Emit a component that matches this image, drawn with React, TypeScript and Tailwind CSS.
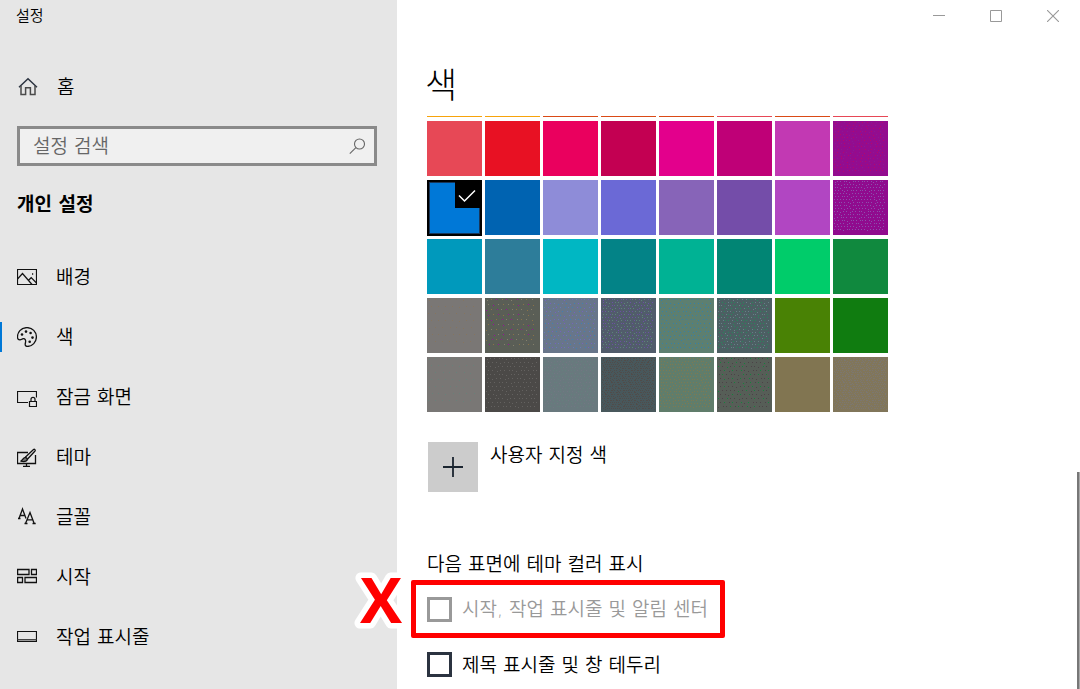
import { FC, ReactNode } from "react";

// Types
interface iNavItem {
  label: string;
  icon: ReactNode;
  active?: boolean;
}

interface iSwatch {
  color: string;
  dots?: string[];
  step?: number;
}

// Icons
const HomeIcon = () => (
  <svg width="20" height="20" viewBox="0 0 20 20" fill="none" stroke="#2b3340" strokeWidth="1.5">
    <path d="M1 10.3 10 1.8l9 8.5" />
    <path d="M3 8.8v8.7h4.6v-6.8h4.8v6.8H17V8.8" stroke="#4a4a4a" />
  </svg>
);

const SearchIcon = () => (
  <svg width="18" height="18" viewBox="0 0 18 18" fill="none" stroke="#666" strokeWidth="1.1">
    <circle cx="11.5" cy="7" r="5" />
    <path d="M7.9 10.6 1.8 16.7" />
  </svg>
);

const PictureIcon = () => (
  <svg width="20" height="20" viewBox="0 0 20 20" fill="none" stroke="#111" strokeWidth="1.2">
    <path d="M.5 2.5h19v15H.5z" />
    <path d="m.5 12 5-5.5 9.5 11M11.5 13.300l2.700-2.600 5.300 5.300" />
    <path d="M15 7h1.200" strokeWidth="1.4" />
  </svg>
);

const PaletteIcon = () => (
  <svg width="20" height="20" viewBox="0 0 20 20" fill="none" stroke="#111" strokeWidth="1.3">
    <path d="M.6 11.2C-.2 5 4.3.6 10 .6c5.5 0 9.4 4.2 9.4 9.4s-4 9.4-9 9.4c-1.6 0-2.300-.9-2.200-2.200.1-1.500.6-2 .4-3.500-.2-1.600-1.600-2.600-3.100-1.900-1 .5-1.400 1.100-2.700 1-1.200-.1-2-.7-2.200-1.600Z" />
    <g fill="#111" stroke="none">
      <circle cx="5" cy="7.5" r="1.3" />
      <circle cx="9" cy="4.6" r="1.3" />
      <circle cx="13.600" cy="6" r="1.3" />
      <circle cx="15.5" cy="10.600" r="1.3" />
      <circle cx="12.700" cy="14.800" r="1.3" />
    </g>
  </svg>
);

const LockScreenIcon = () => (
  <svg width="20" height="20" viewBox="0 0 20 20" fill="none" stroke="#111" strokeWidth="1.2">
    <path d="M11 15.5H.5v-11h19v6" />
    <path d="M12.5 14.5h7v5h-7z" />
    <path d="M14 14.500v-2.200a2 2 0 0 1 4 0v2.200" />
  </svg>
);

const ThemeIcon = () => (
  <svg width="20" height="20" viewBox="0 0 20 20" fill="none" stroke="#111" strokeWidth="1.3">
    <path d="M11 5.5H.5v11h18V8M9.5 16.5v3M6 19.4h7" />
    <path d="M8.3 10.3 16.5 2.5c1-.7 2.3.5 1.5 1.5l-7.600 8.300" />
    <path d="M8.3 10.3c1 .2 1.800 1 2.100 2-.5 2-3.500 2.600-6.900 1.900 2.300-.4 2.100-3.700 4.800-3.900Z" fill="#777" />
  </svg>
);

const FontIcon = () => (
  <svg width="20" height="20" viewBox="0 1 20 20" fill="none" stroke="#111" strokeWidth="1.3">
    <path d="M2 12.5 5.5 3 9 12.5M3.2 9.5h4.600M1 12.500h2.500" />
    <path d="M8.5 17.5 13 6.500l4.200 11M10 13.800h5.800M7.500 17.500h3M15.500 17.500h3.200" />
  </svg>
);

const StartIcon = () => (
  <svg width="20" height="20" viewBox="0 0 20 20" fill="none" stroke="#111" strokeWidth="1.3">
    <path d="M.6 2.5h11.400v5H.6zM14.500 2.500h5v5h-5zM.6 10.500h4.900v5H.6zM8 10.500h11.500v5H8z" />
  </svg>
);

const TaskbarIcon = () => (
  <svg width="20" height="20" viewBox="0 0 20 20" fill="none" stroke="#111">
    <path d="M1 12.5h18v2H1z" fill="#999" stroke="none" />
    <path d="M.5 4.5h19v10H.5z" strokeWidth="1.2" />
    <path d="M.5 12.5h19" stroke="#444" />
  </svg>
);

// Data
const navItems: iNavItem[] = [
  { label: "배경", icon: <PictureIcon /> },
  { label: "색", icon: <PaletteIcon />, active: true },
  { label: "잠금 화면", icon: <LockScreenIcon /> },
  { label: "테마", icon: <ThemeIcon /> },
  { label: "글꼴", icon: <FontIcon /> },
  { label: "시작", icon: <StartIcon /> },
  { label: "작업 표시줄", icon: <TaskbarIcon /> },
];

const clippedRow = ["#f7a30b", "#f7a30b", "#da4a16", "#da4a16", "#da4a16", "#e74856", "#da4a16", "#e74856"];

const swatches: iSwatch[] = [
  { color: "#e74856" },
  { color: "#e81123" },
  { color: "#ea005e" },
  { color: "#c30052" },
  { color: "#e3008c" },
  { color: "#bf0077" },
  { color: "#c239b3" },
  { color: "#930c8f", dots: ["#b8066c", "#8a1a94", "#a00a80"], step: 3 },
  { color: "#0078d7" },
  { color: "#0063b1" },
  { color: "#8e8cd8" },
  { color: "#6b69d6" },
  { color: "#8764b8" },
  { color: "#744da9" },
  { color: "#b146c2" },
  { color: "#900b8e", dots: ["#8c4fae"], step: 3 },
  { color: "#0099bc" },
  { color: "#2d7d9a" },
  { color: "#00b7c3" },
  { color: "#038387" },
  { color: "#00b294" },
  { color: "#018574" },
  { color: "#00cc6a" },
  { color: "#10893e" },
  { color: "#7a7775", dots: ["#857560"], step: 7 },
  { color: "#5a5e56", dots: ["#84806c", "#8a7348", "#98109a"], step: 5 },
  { color: "#68768a", dots: ["#7660c0", "#6878b8", "#3e80b4"], step: 4 },
  { color: "#515c6b", dots: ["#6c50a4", "#5d8579"], step: 3 },
  { color: "#5d7f70", dots: ["#3480a8"], step: 4 },
  { color: "#4c5f63", dots: ["#668087", "#26885a"], step: 3 },
  { color: "#498205" },
  { color: "#107c10" },
  { color: "#797775", dots: ["#698079"], step: 7 },
  { color: "#4b4947", dots: ["#646260"], step: 4 },
  { color: "#69797e", dots: ["#64817d", "#727783"], step: 3 },
  { color: "#48585c", dots: ["#504c4a"], step: 2 },
  { color: "#607d6b", dots: ["#7f7a50"], step: 3 },
  { color: "#565e57", dots: ["#4c4247", "#13843c", "#4c4247"], step: 4 },
  { color: "#817551" },
  { color: "#81765a", dots: ["#7c7770"], step: 2 },
];

// Components
const Dither: FC<{ dots: string[]; step: number }> = ({ dots, step }) => {
  const count = Math.floor(53 / step);
  return (
    <svg className="block" width="55" height="55" viewBox="0 0 55 55" shapeRendering="crispEdges" aria-hidden="true">
      {Array.from({ length: count * count }, (_, i) => {
        const row = Math.floor(i / count);
        const seed = (i * 37 + row * row * 11) % 101;
        const x = 1 + (i % count) * step + (row % 2) * Math.floor(step / 2) + (seed % 5 === 0 ? 1 : 0);
        const y = 1 + row * step + (seed % 7 === 0 ? 1 : 0);
        return <rect key={i} x={x} y={y} width="1" height="1" fill={dots[seed % dots.length]} />;
      })}
    </svg>
  );
};

const Swatch: FC<iSwatch & { selected: boolean }> = ({ color, dots, step = 4, selected }) => (
  <button
    type="button"
    aria-label={color}
    aria-pressed={selected}
    className="relative size-[55px]"
    style={{ backgroundColor: color }}
  >
    {dots && <Dither dots={dots} step={step} />}
    {selected && (
      <>
        <span className="absolute inset-0 -bottom-px border-2 border-black bg-[#0078d7] outline -outline-offset-3 outline-[#17365a]" />
        <span className="absolute top-0 right-0 flex h-7 w-[27px] items-center justify-center bg-black pr-[3px] pt-1">
          <svg width="18" height="14" viewBox="0 0 18 14" fill="none" stroke="#fff" strokeWidth="1.5">
            <path d="m1 6.5 5.5 5.5L17 1.5" />
          </svg>
        </span>
      </>
    )}
  </button>
);

const Sidebar = () => (
  <aside className="w-[397px] shrink-0 bg-[#e6e6e6]">
    <div className="flex h-8 items-center pl-4 text-[15px]">설정</div>
    <a href="#home" className="mt-[25px] flex h-[60px] items-center gap-[19px] pl-[18px]">
      <HomeIcon />
      홈
    </a>
    <label className="mx-[17px] mt-[9px] mr-5 flex h-10 items-center border-3 border-[#8a8a8a] bg-[#f0f0f0] pr-2 pl-[13px]">
      <input
        type="search"
        aria-label="설정 검색"
        placeholder="설정 검색"
        className="min-w-0 flex-1 bg-transparent outline-none placeholder:text-[#666]"
      />
      <SearchIcon />
    </label>
    <h2 className="mt-6 pl-[17px] text-[19px] leading-7 font-bold">개인 설정</h2>
    <nav className="mt-[29px]">
      {navItems.map((item) => (
        <a
          key={item.label}
          href={`#${item.label}`}
          aria-current={item.active ? "page" : undefined}
          className="relative flex h-[60px] items-center gap-[19px] pl-[17px]"
        >
          {item.active && <span className="absolute left-0 h-[30px] w-[2px] bg-[#0078d7]" />}
          {item.icon}
          {item.label}
        </a>
      ))}
    </nav>
  </aside>
);

const TitleButtons = () => (
  <div className="flex h-8 justify-end gap-[3px]">
    <button type="button" aria-label="최소화" className="flex w-[54px] items-center justify-center">
      <svg width="12" height="12" viewBox="0 0 12 12" stroke="#999">
        <path d="M0 5.5h12" />
      </svg>
    </button>
    <button type="button" aria-label="최대화" className="flex w-[54px] items-center justify-center">
      <svg width="12" height="12" viewBox="0 0 12 12" fill="none" stroke="#999">
        <path d="M.5.5h11v11H.5z" />
      </svg>
    </button>
    <button type="button" aria-label="닫기" className="flex w-[54px] items-center justify-center">
      <svg width="12" height="12" viewBox="0 0 12 12" stroke="#999" strokeWidth="1.1">
        <path d="m0 0 12 12M12 0 0 12" />
      </svg>
    </button>
  </div>
);

export default function App() {
  return (
    <div className="flex min-h-screen bg-white font-['DejaVu_Sans','Noto_Sans_CJK_KR',sans-serif] text-[19px] leading-6 font-[350] text-black">
      <Sidebar />
      <main className="relative min-w-0 flex-1">
        <TitleButtons />
        <div className="pl-[30px]">
          <h1 className="mt-[30px] -ml-0.5 text-[35px] leading-[48px] font-light">색</h1>

          {/* Color grid, first row is scrolled under the heading */}
          <div className="mt-[6px] grid grid-cols-[repeat(8,55px)] gap-x-[3px] gap-y-1">
            {clippedRow.map((color, i) => (
              <span key={`c_${i}`} className="h-px" style={{ backgroundColor: color }} />
            ))}
            {swatches.map((swatch, i) => (
              <Swatch key={`s_${i}`} {...swatch} selected={i === 8} />
            ))}
          </div>

          <button type="button" className="mt-[30px] ml-px flex items-start gap-3 leading-[26px]">
            <span className="flex size-[50px] items-center justify-center bg-[#ccc]">
              <svg width="20" height="20" viewBox="0 0 20 20" stroke="#1b2530" strokeWidth="1.8">
                <path d="M10 0v20M0 10h20" />
              </svg>
            </span>
            사용자 지정 색
          </button>

          <fieldset className="mt-[60px]">
            <legend>다음 표면에 테마 컬러 표시</legend>
            <div className="relative mt-1 -ml-4 w-[314px] pl-4">
              <label className="flex h-[58px] items-center gap-[10px] text-[#999]">
                <input type="checkbox" disabled className="size-[25px] appearance-none border-[3px] border-[#999] bg-white" />
                시작, 작업 표시줄 및 알림 센터
              </label>
              {/* Red callout */}
              <span className="pointer-events-none absolute inset-0 rounded-xs border-5 border-[#f00]" />
              <svg className="pointer-events-none absolute -top-[37px] -left-[65px]" width="70" height="110" viewBox="0 0 70 110">
                <text
                  x="35"
                  y="80"
                  textAnchor="middle"
                  className="fill-[#f00] stroke-white font-['Open_Sans',sans-serif] text-[63px] font-bold"
                  strokeWidth="11"
                  strokeLinejoin="round"
                  paintOrder="stroke"
                >
                  X
                </text>
              </svg>
            </div>
            <label className="mt-[14px] flex w-fit items-center gap-[10px]">
              <input type="checkbox" className="size-[25px] appearance-none border-[3px] border-[#2b3340] bg-white" />
              제목 표시줄 및 창 테두리
            </label>
          </fieldset>
        </div>
        <span className="absolute top-[472px] right-0 bottom-0 w-[3px] border-r border-[#aaa] bg-[#777]" />
      </main>
    </div>
  );
}
